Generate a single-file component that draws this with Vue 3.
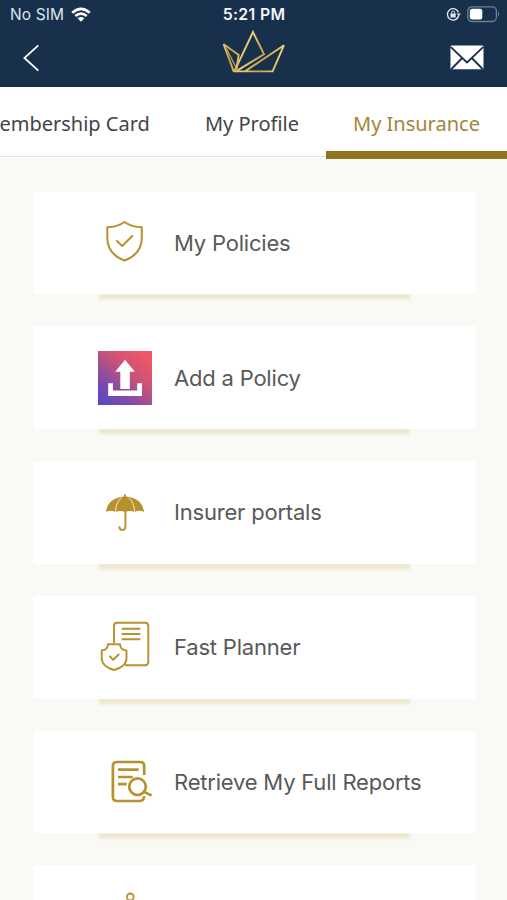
<script setup>
const tabs = [
  { name: 'Membership Card', key: 'membership' },
  { name: 'My Profile', key: 'profile' },
  { name: 'My Insurance', key: 'insurance' },
]
const items = [
  { icon: 'shield', label: 'My Policies' },
  { icon: 'upload', label: 'Add a Policy' },
  { icon: 'umbrella', label: 'Insurer portals' },
  { icon: 'planner', label: 'Fast Planner' },
  { icon: 'reports', label: 'Retrieve My Full Reports' },
  { icon: 'person', label: '' },
]
</script>

<template>
  <div class="screen">
    <header class="header">
      <div class="status">
        <div class="carrier">
          <span>No SIM</span>
          <svg width="20" height="16" viewBox="0 0 20 16">
            <g fill="none" stroke="#fff" stroke-width="2.7">
              <path d="M1.2 5.7Q10-2.1 18.8 5.7" />
              <path d="M4.3 9.1Q10 4.1 15.7 9.1" />
            </g>
            <path d="M6.6 11.3Q10 8.5 13.4 11.3L10 14.7Z" fill="#fff" />
          </svg>
        </div>
        <div class="time">5:21 PM</div>
        <div class="indicators">
          <svg width="15" height="15" viewBox="0 0 15 15">
            <path d="M12.7 8.5A5.7 5.7 0 1 1 12.5 5.5" fill="none" stroke="#dce5ee" stroke-width="1.4" />
            <path d="M10.6 6.6H14.9L12.8 9.3Z" fill="#dce5ee" />
            <rect x="4.5" y="6.6" width="5.2" height="4" rx=".6" fill="#dce5ee" />
            <path d="M5.5 7V5.7Q5.5 4.2 7.1 4.2T8.7 5.7V7" fill="none" stroke="#dce5ee" />
          </svg>
          <svg width="33" height="17" viewBox="0 0 33 17">
            <rect x=".8" y=".8" width="28.6" height="14.7" rx="4.2" fill="none" stroke="#71808f" stroke-width="1.3" />
            <rect x="2.8" y="2.7" width="12.5" height="10.8" rx="2.3" fill="#fff" />
            <path d="M31 5.5Q33.2 8.1 31 10.7Z" fill="#71808f" />
          </svg>
        </div>
      </div>
      <div class="nav">
        <svg class="back" width="18" height="28" viewBox="0 0 18 28">
          <path d="M15.3 1.4L1.4 14L15.3 26.7" fill="none" stroke="#fff" stroke-width="1.8" />
        </svg>
        <svg class="crown" width="66" height="46" viewBox="0 0 66 46">
          <defs>
            <linearGradient id="crownGold" gradientUnits="userSpaceOnUse" x1="0" y1="0" x2="66" y2="20">
              <stop offset="0" stop-color="#f0dc82" />
              <stop offset=".25" stop-color="#c79f45" />
              <stop offset=".45" stop-color="#ead078" />
              <stop offset=".7" stop-color="#c9a346" />
              <stop offset="1" stop-color="#eed980" />
            </linearGradient>
          </defs>
          <g fill="none" stroke="url(#crownGold)" stroke-width="1.9" stroke-miterlimit="3">
            <path d="M12.8 42.6L2.6 15.2L17.7 26L15.5 40" />
            <path d="M5.4 19.5L15 38.5" stroke-width="1.1" />
            <path d="M13.6 42L32 3L43 25.2L14.5 42.6" />
            <path d="M12 42.4H51.6L63 16.2L24.5 42" />
          </g>
        </svg>
        <svg class="mail" width="34" height="25" viewBox="0 0 34 25">
          <rect x=".5" y=".5" width="33" height="23.7" rx="1" fill="#fff" />
          <path d="M.6 1.8L17 17.5L33.4 1.8M1.4 24L12.2 13M32.6 24L21.8 13" fill="none" stroke="#18304b" stroke-width="1.8" />
        </svg>
      </div>
    </header>

    <nav class="tabs">
      <div v-for="tab in tabs" :key="tab.key" class="tab" :class="tab.key">
        <span>{{ tab.name }}</span>
      </div>
    </nav>

    <main class="list">
      <section v-for="item in items" :key="item.icon" class="card">
        <svg class="icon" width="54" height="54" viewBox="0 0 54 54">
          <g v-if="item.icon === 'shield'" fill="none" stroke="#b8912f" stroke-width="2" stroke-linejoin="round" stroke-linecap="round">
            <path d="M26.5 6Q19.5 11 9.3 11.3V22Q9.3 38 26.5 44.5Q43.8 38 43.8 22V11.3Q33.5 11 26.5 6Z" />
            <path d="M19 25L24.2 30L34.3 20" />
          </g>
          <template v-else-if="item.icon === 'upload'">
            <defs>
              <linearGradient id="uploadFill" x1="0" y1="1" x2=".8" y2="0">
                <stop offset="0" stop-color="#5547c7" />
                <stop offset=".28" stop-color="#784bae" />
                <stop offset=".65" stop-color="#c95379" />
                <stop offset="1" stop-color="#ef5764" />
              </linearGradient>
            </defs>
            <rect width="54" height="54" fill="url(#uploadFill)" />
            <path d="M27 8.8L36.8 20.8H31.8V38H22.3V20.8H17.2Z" fill="#fff" />
            <path d="M10.2 32.3H15V39.5H39.2V32.3H44V45H10.2Z" fill="#fff" />
          </template>
          <g v-else-if="item.icon === 'umbrella'" transform="translate(0 .9)">
            <path d="M8 26Q9.5 12.5 26 10.6V8.5H28V10.6Q44.5 12.5 46 26Q41.5 23.8 36.7 26Q32 24 27 26Q22 24 17.3 26Q12.5 23.8 8 26Z" fill="#b8912f" />
            <path d="M17.3 26Q18 16.5 23.5 11.7M36.7 26Q36 16.5 30.5 11.7" fill="none" stroke="#f5ebc9" stroke-width="1" />
            <path d="M27.4 25V40.5Q27.4 44 24.3 44Q21.4 44 21.3 40.5" fill="none" stroke="#b8912f" stroke-width="1.9" />
          </g>
          <g v-else-if="item.icon === 'planner'" fill="none" stroke="#b8912f" stroke-width="1.9" stroke-linejoin="round">
            <path d="M16 23V6Q16 2.8 19.2 2.8H47Q50.3 2.8 50.3 6V42Q50.3 45.2 47 45.2H27" />
            <path d="M23.7 8.7H42.3M23.7 14H42.3M23.7 19.3H42.3" />
            <path d="M10 24.3H22Q22 30 28.5 30.5V38Q28.5 46.5 16 50Q3.7 46.5 3.7 38V30.5Q10 30 10 24.3Z" />
            <path d="M11.5 36L15.2 39.8L21.2 34" />
          </g>
          <g v-else-if="item.icon === 'reports'" fill="none" stroke="#b8912f" stroke-width="2.7">
            <path d="M46.2 20V11Q46.2 7 42.2 7H18.9Q14.9 7 14.9 11V42Q14.9 46 18.9 46H42Q45.8 46 46.2 41" />
            <path d="M20 14.7H40.7M20 22H34.8M20 29.2H28.8" />
            <circle cx="39.5" cy="31.7" r="8.3" />
            <path d="M45.6 36.6L53.6 40.6" />
          </g>
          <g v-else fill="none" stroke="#b8912f" stroke-width="1.8">
            <circle cx="32.3" cy="6.9" r="3.4" />
            <path d="M25.5 22V16Q25.5 13 28.5 13H36Q39 13 39 16V22M32.3 22V46" />
          </g>
        </svg>
        <span class="label">{{ item.label }}</span>
      </section>
    </main>
  </div>
</template>

<style>
body { margin: 0; overflow: hidden; }
</style>

<style scoped>
.screen {
  width: 507px;
  height: 900px;
  overflow: hidden;
  display: flex;
  flex-direction: column;
  background: #f9f9f5;
  font-family: Inter, "Liberation Sans", sans-serif;
}
.header {
  flex: none;
  height: 87px;
  box-sizing: border-box;
  background: #18304b;
  color: #f0f4f8;
}
.status {
  height: 29px;
  display: grid;
  grid-template-columns: 1fr auto 1fr;
  align-items: center;
  padding: 0 7px 0 10px;
  box-sizing: border-box;
  font-size: 15.5px;
  line-height: 29px;
}
.carrier { display: flex; align-items: center; gap: 7px; color: #dce5ee; letter-spacing: .1px; }
.time { font-weight: 600; font-size: 15.8px; letter-spacing: .35px; padding-right: 2px; }
.indicators { display: flex; justify-content: flex-end; align-items: center; gap: 6px; }
.nav {
  height: 58px;
  display: grid;
  grid-template-columns: 1fr auto 1fr;
  align-items: start;
  padding: 0 23px 0 23px;
  box-sizing: border-box;
}
.back { margin-top: 15px; }
.crown { margin-left: 1px; }
.mail { margin-top: 16px; justify-self: end; }
.tabs {
  flex: none;
  height: 72px;
  display: flex;
  justify-content: flex-end;
  background: linear-gradient(#fff 69px, #e3e3e3 69px, #e3e3e3 70px, #fcfcfb 70px);
  font-family: "Noto Sans", "Open Sans", sans-serif;
  font-size: 20px;
  line-height: 74px;
  color: #444;
  white-space: nowrap;
}
.tab { flex: none; box-sizing: border-box; height: 72px; padding: 0 27px; }
.tab.membership { padding-right: 28px; }
.tab.insurance { width: 181px; color: #a18638; border-bottom: 8px solid #92741f; }
.list {
  display: flex;
  flex-direction: column;
  gap: 32px;
  padding: 32.5px 31.5px 0 33px;
}
.card {
  flex: none;
  position: relative;
  height: 102.8px;
  display: flex;
  align-items: center;
  gap: 22px;
  padding-left: 65px;
  box-sizing: border-box;
  background: #fff;
  border-radius: 3px;
}
.card::after {
  content: "";
  position: absolute;
  left: 66px;
  right: 66px;
  top: 100%;
  height: 7px;
  background: linear-gradient(#e9e3c4, #eeead2 55%, #f9f9f500);
  filter: blur(.8px);
  clip-path: inset(0 -3px -3px -3px);
}
.icon { flex: none; }
.label { font-size: 22px; line-height: 30px; letter-spacing: -.2px; color: #595959; white-space: nowrap; }
</style>
